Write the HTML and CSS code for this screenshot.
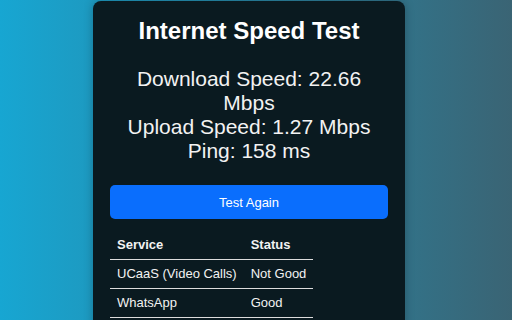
FILE: index.html
```html
<!DOCTYPE html>
<html lang="en">
  <head>
    <meta charset="UTF-8" />
    <title>Internet Speed Test</title>
    <link rel="stylesheet" href="styles.css">
  </head>
  <body>
    <main class="card">
      <h1 class="title">Internet Speed Test</h1>
      <div class="results">
        <p>Download Speed: 22.66 Mbps</p>
        <p>Upload Speed: 1.27 Mbps</p>
        <p>Ping: 158 ms</p>
      </div>
      <button class="again">Test Again</button>
      <table class="services">
        <thead>
          <tr>
            <th>Service</th>
            <th>Status</th>
          </tr>
        </thead>
        <tbody>
          <tr>
            <td>UCaaS (Video Calls)</td>
            <td>Not Good</td>
          </tr>
          <tr>
            <td>WhatsApp</td>
            <td>Good</td>
          </tr>
        </tbody>
      </table>
    </main>
  </body>
</html>
```

FILE: styles.css
```css
* {
  box-sizing: border-box;
  margin: 0;
}
body {
  height: 320px;
  overflow: hidden;
  display: flex;
  justify-content: center;
  align-items: flex-start;
  padding-top: 1px;
  padding-right: 14px;
  font-family: "Liberation Sans", Arial, sans-serif;
  color: #f2f2f2;
  background: linear-gradient(to right, #17a6d2, #3a6474);
}
.card {
  width: 312px;
  min-height: 340px;
  padding: 16px 17px;
  background: #0a1a20;
  border-radius: 8px;
  box-shadow: 0 0 10px rgba(0, 0, 0, 0.25);
  display: flex;
  flex-direction: column;
}
.card > * {
  flex-shrink: 0;
}
.title {
  font-size: 24px;
  text-align: center;
  color: #fff;
  margin-bottom: 22px;
}
.results {
  font-size: 21px;
  line-height: 24px;
  text-align: center;
  margin-bottom: 22px;
}
.again {
  height: 34px;
  border: none;
  border-radius: 5px;
  background: #0a6efd;
  color: #fff;
  font-family: inherit;
  font-size: 13px;
  margin-bottom: 12px;
}
.services {
  border-collapse: collapse;
  font-size: 13px;
  line-height: 16px;
  align-self: flex-start;
}
.services th,
.services td {
  text-align: left;
  padding: 6px 7px;
  border-bottom: 1px solid #ddd;
}
```
